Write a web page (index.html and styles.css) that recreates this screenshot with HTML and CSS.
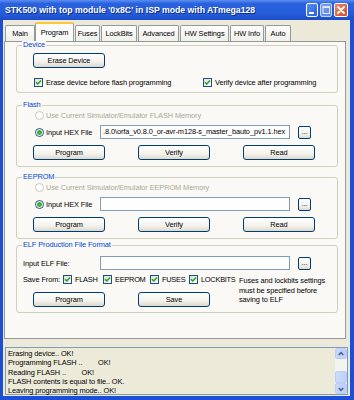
FILE: index.html
```html
<!DOCTYPE html>
<html>
    <head lang="en">
        <meta charset="utf-8">
        <title>STK500 Program</title>
        <link rel="stylesheet" href="styles.css">
    </head>
    <body>
        <div class="window">
            <div class="titlebar">
                <span class="title">STK500 with top module '0x8C' in ISP mode with ATmega128</span>
                <div class="captionButtons">
                    <span class="capBtn">
                        <svg width="12" height="14" viewBox="0 0 12 14"><rect x="3" y="9" width="5" height="2" fill="#fff"/></svg>
                    </span>
                    <span class="capBtn capDisabled">
                        <svg width="12" height="14" viewBox="0 0 12 14"><rect x="3" y="3.5" width="6.5" height="7" fill="none" stroke="#dfe8fb" stroke-width="1"/><rect x="3" y="3.5" width="6.5" height="1.5" fill="#dfe8fb"/></svg>
                    </span>
                    <span class="capBtn capClose">
                        <svg width="14" height="14" viewBox="0 0 14 14"><path d="M4 4 L10 10 M10 4 L4 10" stroke="#fff" stroke-width="1.8" stroke-linecap="round"/></svg>
                    </span>
                </div>
            </div>
            <div class="client">
                <div class="tabStrip">
                    <span class="tab tabMain">Main</span>
                    <span class="tab tabSelected">Program</span>
                    <span class="tab tabFuses">Fuses</span>
                    <span class="tab tabLock">LockBits</span>
                    <span class="tab tabAdv">Advanced</span>
                    <span class="tab tabHw">HW Settings</span>
                    <span class="tab tabInfo">HW Info</span>
                    <span class="tab tabAuto">Auto</span>
                </div>
                <div class="tabPage">
                    <div class="group groupDevice">
                        <span class="groupTitle">Device</span>
                        <div class="row">
                            <button class="btn btnErase">Erase Device</button>
                        </div>
                        <div class="row checkRow">
                            <label class="check checkErase"><span class="box"><svg width="7" height="7" viewBox="0 0 7 7"><path d="M1 3.2 L2.8 5 L6 1.6" fill="none" stroke="#21a121" stroke-width="1.5"/></svg></span>Erase device before flash programming</label>
                            <label class="check"><span class="box"><svg width="7" height="7" viewBox="0 0 7 7"><path d="M1 3.2 L2.8 5 L6 1.6" fill="none" stroke="#21a121" stroke-width="1.5"/></svg></span>Verify device after programming</label>
                        </div>
                    </div>

                    <div class="group groupMem groupFlash">
                        <span class="groupTitle">Flash</span>
                        <div class="row radioRow">
                            <span class="radio radioOff"></span>
                            <span class="disabledText">Use Current Simulator/Emulator FLASH Memory</span>
                        </div>
                        <div class="row fileRow">
                            <span class="radioLabel"><span class="radio radioOn"></span>Input HEX File</span>
                            <span class="field">.8.0\orfa_v0.8.0_or-avr-m128-s_master_bauto_pv1.1.hex</span>
                            <button class="btn btnBrowse">...</button>
                        </div>
                        <div class="row buttonRow">
                            <button class="btn">Program</button>
                            <button class="btn">Verify</button>
                            <button class="btn">Read</button>
                        </div>
                    </div>

                    <div class="group groupMem groupEeprom">
                        <span class="groupTitle">EEPROM</span>
                        <div class="row radioRow">
                            <span class="radio radioOff"></span>
                            <span class="disabledText">Use Current Simulator/Emulator EEPROM Memory</span>
                        </div>
                        <div class="row fileRow">
                            <span class="radioLabel"><span class="radio radioOn"></span>Input HEX File</span>
                            <span class="field"></span>
                            <button class="btn btnBrowse">...</button>
                        </div>
                        <div class="row buttonRow">
                            <button class="btn">Program</button>
                            <button class="btn">Verify</button>
                            <button class="btn">Read</button>
                        </div>
                    </div>

                    <div class="group groupElf">
                        <span class="groupTitle">ELF Production File Format</span>
                        <div class="row fileRow elfFileRow">
                            <span class="elfLabel">Input ELF File:</span>
                            <span class="field"></span>
                            <button class="btn btnBrowse">...</button>
                        </div>
                        <div class="elfBottom">
                            <div class="elfLeft">
                                <div class="row saveRow">
                                    <span class="saveLabel">Save From:</span>
                                    <label class="check saveFlash"><span class="box"><svg width="7" height="7" viewBox="0 0 7 7"><path d="M1 3.2 L2.8 5 L6 1.6" fill="none" stroke="#21a121" stroke-width="1.5"/></svg></span>FLASH</label>
                                    <label class="check saveEeprom"><span class="box"><svg width="7" height="7" viewBox="0 0 7 7"><path d="M1 3.2 L2.8 5 L6 1.6" fill="none" stroke="#21a121" stroke-width="1.5"/></svg></span>EEPROM</label>
                                    <label class="check saveFuses"><span class="box"><svg width="7" height="7" viewBox="0 0 7 7"><path d="M1 3.2 L2.8 5 L6 1.6" fill="none" stroke="#21a121" stroke-width="1.5"/></svg></span>FUSES</label>
                                    <label class="check"><span class="box"><svg width="7" height="7" viewBox="0 0 7 7"><path d="M1 3.2 L2.8 5 L6 1.6" fill="none" stroke="#21a121" stroke-width="1.5"/></svg></span>LOCKBITS</label>
                                </div>
                                <div class="row buttonRow elfButtons">
                                    <button class="btn">Program</button>
                                    <button class="btn">Save</button>
                                </div>
                            </div>
                            <p class="elfNote">Fuses and lockbits settings must be specified before saving to ELF</p>
                        </div>
                    </div>
                </div>

                <div class="log">
                    <div class="logText">
                        <div>Erasing device.. OK!</div>
                        <div>Programming FLASH ..&nbsp;&nbsp;&nbsp;&nbsp;&nbsp;&nbsp;&nbsp; OK!</div>
                        <div>Reading FLASH ..&nbsp;&nbsp;&nbsp;&nbsp;&nbsp;&nbsp;&nbsp; OK!</div>
                        <div>FLASH contents is equal to file.. OK.</div>
                        <div>Leaving programming mode.. OK!</div>
                    </div>
                    <div class="scrollbar">
                        <span class="scrollArrow">
                            <svg width="11" height="10" viewBox="0 0 11 10"><path d="M3 6 L5.5 3.5 L8 6" fill="none" stroke="#4d6185" stroke-width="1.6"/></svg>
                        </span>
                        <span class="scrollTrack"></span>
                        <span class="scrollThumb"></span>
                        <span class="scrollArrow">
                            <svg width="11" height="10" viewBox="0 0 11 10"><path d="M3 4 L5.5 6.5 L8 4" fill="none" stroke="#4d6185" stroke-width="1.6"/></svg>
                        </span>
                    </div>
                </div>
            </div>
        </div>
    </body>
</html>
```

FILE: styles.css
```css
body {
    margin: 0;
    font-family: "Liberation Sans", Arial, sans-serif;
    font-size: 7.4px;
    letter-spacing: -0.1px;
    color: #000;
}
.window {
    width: 354px;
    height: 400px;
    background: #1c4fd6;
    display: flex;
    flex-direction: column;
}
.titlebar {
    height: 20px;
    display: flex;
    align-items: center;
    justify-content: space-between;
    padding: 0 6px 0 5px;
    background: linear-gradient(#5a8ef0, #2a62de 18%, #245cda 70%, #1b4cc6);
}
.title {
    color: #fff;
    font-weight: bold;
    font-size: 8.7px;
    letter-spacing: 0;
    text-shadow: 1px 1px 0 #0d2a8a;
    white-space: nowrap;
}
.captionButtons {
    display: flex;
    gap: 2px;
}
.capBtn {
    width: 12px;
    height: 14px;
    border: 1px solid #fff;
    border-radius: 2px;
    box-sizing: border-box;
    background: linear-gradient(135deg, #5b8cf2, #2a5fe0);
    display: flex;
    align-items: center;
    justify-content: center;
    overflow: hidden;
}
.capBtn svg {
    flex: none;
}
.capDisabled {
    background: linear-gradient(135deg, #7aa0f2, #5b86ea);
    border-color: #c6d5f8;
}
.capClose {
    width: 14px;
    background: linear-gradient(135deg, #e88a6a, #d84a24);
}
.client {
    flex: 1;
    margin: 0 4px 4px 3px;
    background: #ece9d8;
}
.tabStrip {
    display: flex;
    align-items: flex-end;
    height: 21px;
    padding-left: 2px;
    position: relative;
    z-index: 1;
}
.tab {
    height: 16px;
    box-sizing: border-box;
    border: 1px solid #919b9c;
    border-bottom: none;
    border-radius: 2px 2px 0 0;
    background: linear-gradient(#fefefe, #f0efe8);
    display: flex;
    align-items: center;
    justify-content: center;
    white-space: nowrap;
    margin-right: 1px;
}
.tabMain { width: 30px; }
.tabSelected {
    width: 39px;
    height: 19px;
    margin: 0 -1px 0 -1px;
    border-top: 2px solid #ffc83c;
    background: #fbfbf9;
    padding-bottom: 1px;
}
.tabFuses { width: 25px; margin-left: 2px; }
.tabLock { width: 36px; }
.tabAdv { width: 41px; }
.tabHw { width: 49px; }
.tabInfo { width: 34px; }
.tabAuto { width: 26px; }
.tabPage {
    margin-left: 1px;
    width: 342px;
    height: 298px;
    box-sizing: border-box;
    border: 1px solid #919b9c;
    background: #faf9f5;
    padding: 3px 0 0 11px;
}
.group {
    position: relative;
    width: 322px;
    box-sizing: border-box;
    border: 1px solid #d0d0bf;
    border-radius: 3px;
}
.groupTitle {
    position: absolute;
    top: -6px;
    left: 5px;
    padding: 0 1px;
    line-height: 10px;
    background: #faf9f5;
    color: #0046d5;
}
.row {
    display: flex;
    align-items: center;
    white-space: nowrap;
}
.groupDevice {
    height: 48px;
    padding: 7px 0 0 16px;
}
.btn {
    font-family: inherit;
    font-size: 7.4px;
    letter-spacing: -0.1px;
    width: 72px;
    height: 15px;
    padding: 0;
    border: 1px solid #003c74;
    border-radius: 3px;
    background: linear-gradient(#ffffff, #f3f2ec 60%, #dcd8cc);
    color: #000;
}
.checkRow {
    margin-top: 10px;
    height: 9px;
    padding-left: 1px;
}
.check {
    display: flex;
    align-items: center;
    white-space: nowrap;
}
.checkErase {
    width: 169px;
}
.box {
    width: 9px;
    height: 9px;
    box-sizing: border-box;
    border: 1px solid #1c5180;
    background: linear-gradient(135deg, #dcdcd7, #fff);
    margin-right: 3px;
    display: flex;
    align-items: center;
    justify-content: center;
    flex: none;
}
.groupMem {
    padding: 4px 0 6px 0;
}
.groupFlash {
    margin-top: 12px;
}
.groupEeprom {
    margin-top: 10px;
}
.radioRow {
    height: 11px;
    padding-left: 18px;
}
.radio {
    width: 9px;
    height: 9px;
    box-sizing: border-box;
    border-radius: 50%;
    border: 1px solid #1c5180;
    background: #fff;
    margin-right: 2px;
    flex: none;
    display: inline-block;
}
.radioOff {
    border-color: #cac8bb;
}
.radioOn {
    background: radial-gradient(circle, #55c855 0, #21a121 2px, #fff 2.6px);
}
.disabledText {
    color: #aca899;
}
.fileRow {
    height: 14px;
    margin-top: 4px;
}
.radioLabel {
    display: flex;
    align-items: center;
    width: 65px;
    margin-left: 18px;
    white-space: nowrap;
}
.field {
    width: 190px;
    height: 14px;
    box-sizing: border-box;
    border: 1px solid #7f9db9;
    background: #fff;
    padding: 0 2px;
    line-height: 12px;
    white-space: nowrap;
    overflow: hidden;
}
.btnBrowse {
    width: 13px;
    height: 13px;
    margin-left: 8px;
    border-radius: 2px;
    line-height: 8px;
}
.buttonRow {
    margin-top: 6px;
    padding-left: 16px;
    gap: 33px;
}
.groupElf {
    margin-top: 6px;
    height: 68px;
}
.elfFileRow {
    margin-top: 10px;
}
.elfLabel {
    width: 77px;
    margin-left: 6px;
}
.elfBottom {
    display: flex;
}
.elfLeft {
    width: 220px;
}
.saveRow {
    height: 11px;
    margin-top: 4px;
    padding-left: 6px;
}
.saveRow .check {
    letter-spacing: -0.25px;
}
.saveLabel {
    width: 40px;
}
.saveFlash { width: 40px; }
.saveEeprom { width: 47px; }
.saveFuses { width: 39px; }
.elfButtons {
    margin-top: 7px;
}
.elfNote {
    margin: 6px 0 0 2px;
    width: 90px;
    line-height: 9.5px;
}
.log {
    margin: 8px 2px 0 2px;
    height: 48px;
    box-sizing: border-box;
    border: 1px solid #7f9db9;
    background: #ecead9;
    display: flex;
}
.logText {
    flex: 1;
    padding: 1px 0 0 2px;
    line-height: 9.3px;
    white-space: nowrap;
}
.scrollbar {
    width: 12px;
    display: flex;
    flex-direction: column;
    background: #f4f4ee;
}
.scrollArrow {
    height: 11px;
    box-sizing: border-box;
    border: 1px solid #b9cdf6;
    border-radius: 2px;
    background: linear-gradient(90deg, #c8d8fb, #b7cdfa);
    display: flex;
    align-items: center;
    justify-content: center;
}
.scrollTrack {
    flex: 1;
}
.scrollThumb {
    height: 12px;
    box-sizing: border-box;
    border: 1px solid #b9cdf6;
    border-radius: 2px;
    background: linear-gradient(90deg, #cddcfc, #bcd0fa);
}
```
